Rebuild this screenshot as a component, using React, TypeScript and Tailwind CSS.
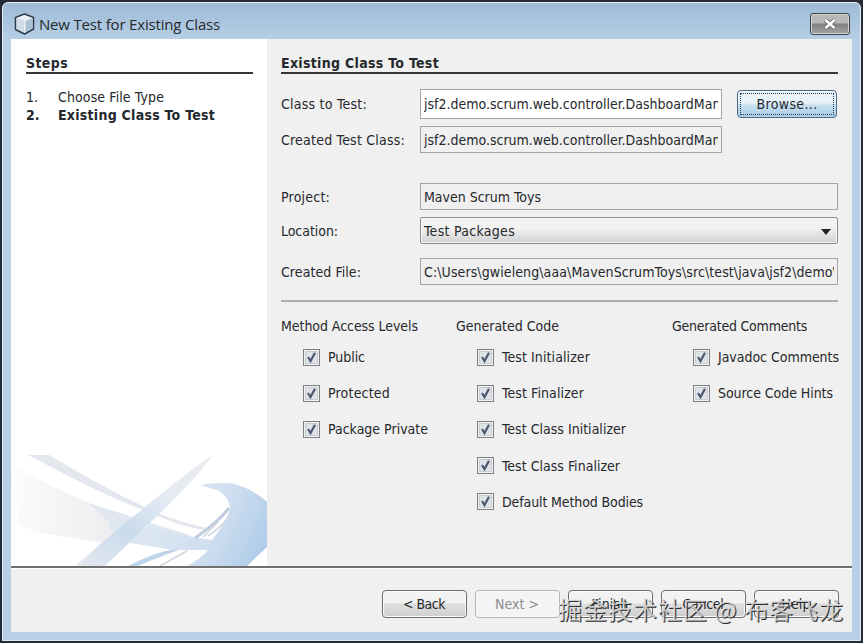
import { useLayoutEffect, useRef, useState } from 'react';

const UI = "font-['DejaVu_Sans_Condensed','DejaVu_Sans',sans-serif]";

type FitProps = { text: string; width: number; className?: string };

/* One line of text whose tracking is adjusted so it spans the given width. */
function Fit({ text, width, className = '' }: FitProps) {
  const ref = useRef<HTMLSpanElement>(null);
  const [spacing, setSpacing] = useState(0);
  useLayoutEffect(() => {
    if (ref.current) {
      const natural = ref.current.getBoundingClientRect().width;
      setSpacing((width - natural) / text.length);
    }
  }, [text, width]);
  return (
    <span ref={ref} className={`inline-block shrink-0 whitespace-pre ${className}`} style={{ letterSpacing: `${spacing}px` }}>
      {text}
    </span>
  );
}

function Cube() {
  return (
    <svg className="h-[22px] w-[21px] shrink-0" viewBox="0 0 21 22">
      <path d="M10.5 1 19.5 4.5V16L10.5 21 1.500 16.500V4.500Z" fill="#c5d5e3" stroke="#2d3a48" strokeWidth="1.5" strokeLinejoin="round" />
      <path d="M10.500 2 18.500 5 11 8.500 2.500 5Z" fill="#e9f1f6" />
      <path d="M11 8.500 18.500 5V15.500L11 19.800Z" fill="#a9c1d5" />
      <path d="M2.500 5.500 10.500 8.500V19.500L2.500 16Z" fill="#cfdbe5" />
      <path d="M10.700 8.500V19.500" stroke="#f4f8fb" strokeWidth="1.200" />
    </svg>
  );
}

function Field({ text, width, className }: FitProps) {
  return (
    <div className={`flex items-center overflow-hidden border border-[#a4a4a4] pl-[3px] ${className}`}>
      <div className="flex w-[calc(100%-3px)] overflow-hidden">
        <Fit text={text} width={width} />
      </div>
    </div>
  );
}

function Check({ text, width }: FitProps) {
  return (
    <div className="flex h-[36.200px] items-center">
      <span className="flex h-[17px] w-[17px] shrink-0 items-center justify-center border border-[#7d7f82] bg-[#f3f3f3]">
        <svg viewBox="0 0 13 13" className="h-[13px] w-[13px]">
          <path d="M.5.5h12v12H.5Z" fill="#dfe3e7" stroke="#c8cccf" />
          <path d="M3 6 5.500 10 10 1.800" fill="none" stroke="#4c5870" strokeWidth="2.200" />
        </svg>
      </span>
      <Fit text={text} width={width} className="ml-2" />
    </div>
  );
}

function FootButton({ text, width, disabled = false }: FitProps & { disabled?: boolean }) {
  return (
    <button
      className={`flex h-7 w-[85px] items-center justify-center rounded-[4px] border shadow-[inset_0_0_0_1px_#fafafa] ${
        disabled
          ? 'border-[#b1b4b5] bg-[#f4f4f4] text-[#8c8c8c]'
          : 'border-[#6c6c6c] bg-linear-to-b from-[#f2f2f2] from-45% via-[#dfdfdf] via-50% to-[#cecece]'
      }`}
    >
      <Fit text={text} width={width} />
    </button>
  );
}

function Swoosh() {
  return (
    <svg viewBox="0 0 256 114" className="block h-[114px] w-[256px]">
      <defs>
        <linearGradient id="orb" gradientUnits="userSpaceOnUse" x1="120" y1="40" x2="256" y2="105">
          <stop offset="0" stopColor="#e2eaf3" />
          <stop offset=".6" stopColor="#d0dff0" />
          <stop offset="1" stopColor="#abcae8" />
        </linearGradient>
        <linearGradient id="haze" x1="0" y1="0" x2="1" y2="0">
          <stop offset="0" stopColor="#fbfbfc" />
          <stop offset="1" stopColor="#ededef" />
        </linearGradient>
        <linearGradient id="band" x1="1" y1="0" x2="0" y2="1">
          <stop offset="0" stopColor="#e9ebf0" />
          <stop offset=".35" stopColor="#e6ebf2" />
          <stop offset=".65" stopColor="#c9dbed" />
          <stop offset="1" stopColor="#e6e9ef" />
        </linearGradient>
      </defs>
      <path d="M3 15C29 29 60 43 82 53L110 65 98 92C65 86 25 82 7 73Z" fill="url(#haze)" />
      <path d="M17 3H38C70 22 102 40 136 56 157 66 180 73 197 76L195 78C175 76 153 67 132 58 95 44 55 23 17 3Z" fill="#e4e8ee" />
      <path d="M78 51C100 58 124 66 146 73L179 83 176 97 119 91C105 85 96 75 99 71Z" fill="#e0e7f0" />
      <path d="M202 3C166 27 131 58 101 82L64 114H94L142 68C162 49 185 26 202 3Z" fill="url(#band)" />
      <path
        d="M189 33C200 31 210 31 219 31 234 34 246 41 256 50V95L236 114H176C185 109 192 104 197 98L162 98 119 91 136 72C155 80 178 85 201 88 208 79 216 69 219 56 218 46 209 37 202 37Z"
        fill="url(#orb)"
      />
      <path d="M218 56C209 68 197 77 184 86" fill="none" stroke="#c0cddc" strokeWidth="3" />
      <path d="M218 64C213 72 206 78 197 84M207 70 192 85" fill="none" stroke="#cfd6df" strokeWidth="1.500" />
      <path d="M117 114C133 106 145 101 159 98H168C150 104 139 109 127 114Z" fill="#bed4ea" />
      <path d="M149 114 176 99" stroke="#d3d5da" strokeWidth="1.500" />
    </svg>
  );
}

export default function App() {
  return (
    <div className={`h-[643px] w-[863px] overflow-hidden bg-[#252c38] pt-0.5 pr-0.5 pb-0.5 pl-[2px] text-[14px] leading-[18px] text-[#25282c] ${UI}`}>
      <div className="relative flex h-[639px] w-[859px] flex-col rounded-t-[6px] border border-[#e4edf5] bg-[#b8d0e7] bg-linear-to-b from-[#9ebad5] to-[#b7d0e8] to-[38px] pr-[8px] pl-[8px]">
        <header className="flex h-9 shrink-0 items-center justify-between">
          <div className="flex items-center gap-1 pt-[5px] pl-[3px] font-['Open_Sans','Noto_Sans']">
            <Cube />
            <Fit text="New Test for Existing Class" width={181} className="text-[15px]" />
          </div>
          <button className="mt-[6px] mr-[2px] flex h-[22px] w-10 items-center justify-center rounded-[3px] border border-[#3c4148] bg-linear-to-b from-[#b8b8b8] from-45% via-[#818181] via-50% to-[#a5a5a5] shadow-[inset_0_0_0_1px_#d5d5d5]">
            <svg viewBox="0 0 14 12" className="h-3 w-[14px]">
              <path d="M2.500 2 11.500 10M11.500 2 2.500 10" stroke="#505050" strokeWidth="4.200" />
              <path d="M2.500 2 11.500 10M11.500 2 2.500 10" stroke="#fff" strokeWidth="2.800" />
            </svg>
          </button>
        </header>

        <div className="flex h-[593px] w-[841px] flex-col bg-[#f0f0f0]">
          <div className="flex h-[527px]">
            <aside className="flex w-[256px] flex-col justify-between bg-white">
              <div className="pt-[15px] pl-[15px]">
                <div className="h-5 w-[227px] border-b-2 border-[#33363c] font-bold">
                  <Fit text="Steps" width={42} />
                </div>
                <div className="mt-[14px] flex">
                  <span className="w-8">1.</span>
                  <Fit text="Choose File Type" width={106} />
                </div>
                <div className="flex font-bold">
                  <span className="w-8">2.</span>
                  <Fit text="Existing Class To Test" width={157} />
                </div>
              </div>
              <Swoosh />
            </aside>

            <main className="w-[571px] pt-[15px] pl-[14px]">
              <div className="h-5 border-b-2 border-[#33363c] font-bold">
                <Fit text="Existing Class To Test" width={158} />
              </div>
              <div className="mt-[15px] flex h-[30px] items-center">
                <div className="w-[139px]"><Fit text="Class to Test:" width={86} /></div>
                <Field text="jsf2.demo.scrum.web.controller.DashboardManager" width={325} className="h-[30px] w-[302px] bg-white" />
                <button className="ml-[15px] flex h-7 w-[100px] rounded-[4px] border border-[#4d6a8b] bg-linear-to-b from-[#e9f3fa] from-45% via-[#c7dff0] via-55% to-[#a9cde9] p-[2px]">
                  <span className="flex h-full w-full items-center justify-center border border-dotted border-[#26384c]">
                    <Fit text="Browse..." width={61} />
                  </span>
                </button>
              </div>
              <div className="mt-[7px] flex h-[27px] items-center">
                <div className="w-[139px]"><Fit text="Created Test Class:" width={124} /></div>
                <Field text="jsf2.demo.scrum.web.controller.DashboardManager" width={325} className="h-[27px] w-[302px]" />
              </div>
              <div className="mt-[30px] flex h-[27px] items-center">
                <div className="w-[139px]"><Fit text="Project:" width={49} /></div>
                <Field text="Maven Scrum Toys" width={117} className="h-[27px] w-[418px]" />
              </div>
              <div className="mt-[7px] flex h-[27px] items-center">
                <div className="w-[139px]"><Fit text="Location:" width={57} /></div>
                <div className="flex h-[27px] w-[418px] items-center justify-between rounded-[2px] border border-[#8b8d90] bg-linear-to-b from-[#f2f2f2] from-40% to-[#d0d1d2] pr-[6px] pl-[3px] shadow-[inset_0_0_0_1px_#f5f5f5]">
                  <Fit text="Test Packages" width={91} />
                  <svg viewBox="0 0 10 6" className="mt-[3px] h-1.5 w-2.5"><path d="M0 0H10L5 6Z" fill="#202225" /></svg>
                </div>
              </div>
              <div className="mt-[14px] flex h-[27px] items-center">
                <div className="w-[139px]"><Fit text="Created File:" width={80} /></div>
                <Field text={'C:\\Users\\gwieleng\\aaa\\MavenScrumToys\\src\\test\\java\\jsf2\\demo\\'} width={413} className="h-[27px] w-[418px]" />
              </div>
              <div className="mt-[15px] h-[2px] bg-[#adadad]" />
              <div className="mt-[15px] flex">
                <section className="w-[175px]">
                  <Fit text="Method Access Levels" width={137} className="block" />
                  <div className="mt-[4px] pl-[22px]">
                    <Check text="Public" width={37} />
                    <Check text="Protected" width={62} />
                    <Check text="Package Private" width={100} />
                  </div>
                </section>
                <section className="w-[216px]">
                  <Fit text="Generated Code" width={103} className="block" />
                  <div className="mt-[4px] pl-[21px]">
                    <Check text="Test Initializer" width={88} />
                    <Check text="Test Finalizer" width={82} />
                    <Check text="Test Class Initializer" width={124} />
                    <Check text="Test Class Finalizer" width={118} />
                    <Check text="Default Method Bodies" width={141} />
                  </div>
                </section>
                <section className="w-[166px]">
                  <Fit text="Generated Comments" width={135} className="block" />
                  <div className="mt-[4px] pl-[21px]">
                    <Check text="Javadoc Comments" width={121} />
                    <Check text="Source Code Hints" width={115} />
                  </div>
                </section>
              </div>
            </main>
          </div>
          <footer className="flex h-[66px] justify-end gap-2 border-t-2 border-[#707070] pt-[22px] pr-[13.500px] shadow-[inset_0_1px_0_#fff]">
            <FootButton text="< Back" width={42} />
            <FootButton text="Next >" width={44} disabled />
            <FootButton text="Finish" width={37} />
            <FootButton text="Cancel" width={41} />
            <FootButton text="Help" width={29} />
          </footer>
        </div>

        <div className="pointer-events-none absolute top-[590px] left-[555px] font-['Noto_Sans_CJK_SC',sans-serif] text-[24px] leading-8 text-[#dedede]/85 [text-shadow:1px_1px_0_#2e2e2e]">
          <Fit text="掘金技术社区 @ 布客飞龙" width={286} />
        </div>
      </div>
    </div>
  );
}
